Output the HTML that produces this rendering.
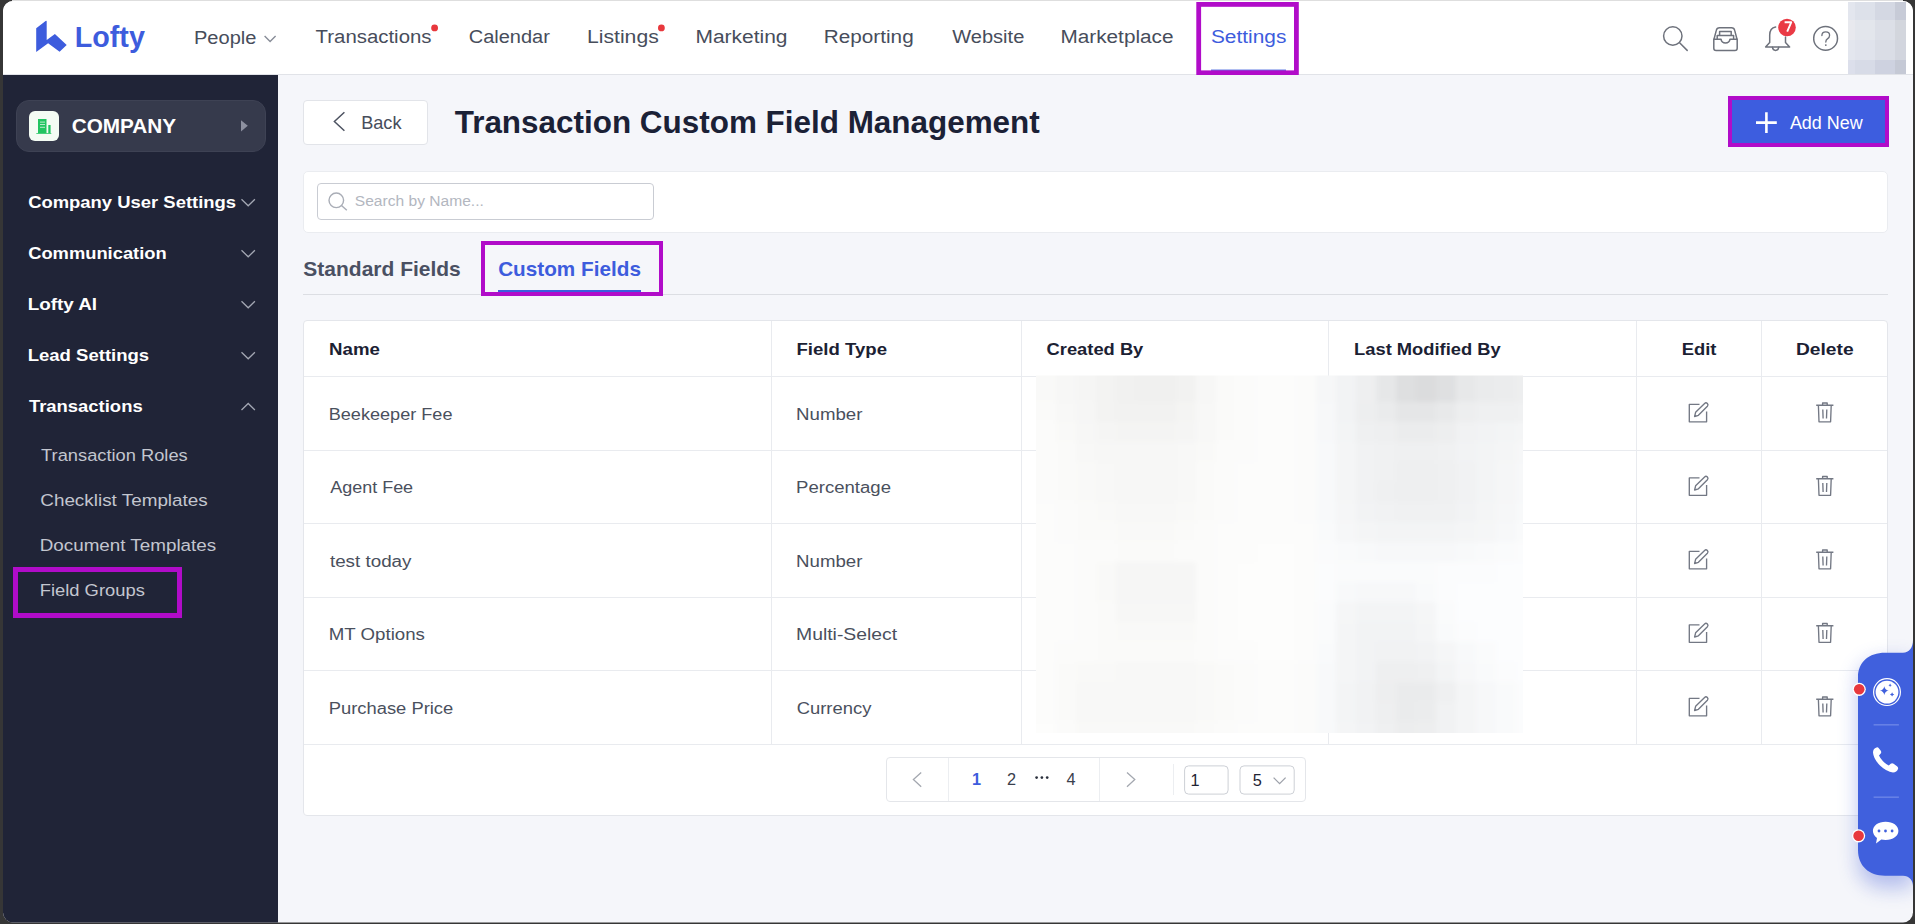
<!DOCTYPE html>
<html><head><meta charset="utf-8">
<style>
*{box-sizing:border-box;margin:0;padding:0}
html,body{width:1915px;height:924px;overflow:hidden;background:#363636;font-family:"Liberation Sans",sans-serif}
#pg{position:absolute;left:0;top:0;width:1915px;height:924px;background:#f5f6fa;clip-path:inset(1px 2px 1.5px 3px round 10px)}
.a{position:absolute}
svg text{font-family:"Liberation Sans",sans-serif}
</style></head><body>
<div class="a" style="left:12px;top:0;width:1891px;height:1px;background:#dedede"></div>
<div id="pg">
  <!-- top bar -->
  <div class="a" style="left:0;top:0;width:1915px;height:74px;background:#fff"></div>
  <div class="a" style="left:0;top:74px;width:1915px;height:1px;background:#e1e3e8"></div>
  <!-- sidebar -->
  <div class="a" style="left:0;top:75px;width:278px;height:849px;background:#202437"></div>
  <div class="a" style="left:16px;top:100px;width:250px;height:52px;border-radius:13px;background:#363a4c;border:1px solid #3e4254"></div>
  <div class="a" style="left:29px;top:111px;width:30px;height:30px;border-radius:6px;background:#f4fcf4"></div>
  <svg class="a" style="left:29px;top:111px" width="30" height="30" viewBox="0 0 30 30">
    <path d="M9 8 H17.5 V22.3 H9 Z" fill="#22c461"/>
    <path d="M19.3 14 H21.6 V22.3 H19.3 Z" fill="#22c461"/>
    <path d="M7.3 22 H22.3 V22.8 H7.3Z" fill="#22c461"/>
    <path d="M11 11.1 H16 M11 13.5 H16 M11 16.3 H16" stroke="#c8f2d6" stroke-width="0.9"/>
  </svg>
  <svg class="a" style="left:240px;top:119px" width="9" height="14" viewBox="0 0 9 14"><path d="M1 1.2 L7.8 6.8 L1 12.4 Z" fill="#8d90a0"/></svg>
  <!-- sidebar chevrons -->
  <svg class="a" style="left:0;top:0" width="278" height="420">
    <g fill="none" stroke="#a3a7b3" stroke-width="1.3">
      <path d="M241.5 199.3 L248.2 205.8 L254.9 199.3"/>
      <path d="M241.5 250.3 L248.2 256.8 L254.9 250.3"/>
      <path d="M241.5 301.3 L248.2 307.8 L254.9 301.3"/>
      <path d="M241.5 352.3 L248.2 358.8 L254.9 352.3"/>
      <path d="M241.5 410 L248.2 403.5 L254.9 410"/>
    </g>
  </svg>
  <div class="a" style="left:13px;top:567px;width:169px;height:51px;border:5px solid #b10cc9"></div>

  <!-- logo mark -->
  <svg class="a" style="left:0;top:0" width="80" height="60">
    <path d="M36.2 28.3 L45.6 20.9 Q46.7 20.3 46.7 21.6 L46.7 39.9 L54.9 34.1 L66.7 45 L59.6 51.7 L48.1 43.3 L36.2 51.9 Z" fill="#3d5cdd"/>
  </svg>
  <!-- nav extras -->
  <svg class="a" style="left:0;top:0" width="1300" height="75">
    <path d="M264.6 36 L270.1 41.4 L275.6 36" fill="none" stroke="#878c97" stroke-width="1.4"/>
    <circle cx="434.6" cy="27.9" r="3.4" fill="#e8383d"/>
    <circle cx="661.4" cy="27.9" r="3.4" fill="#e8383d"/>
    <rect x="1211" y="69.6" width="75" height="1.2" fill="#3d5cdd"/>
    <rect x="1198.7" y="4.4" width="97.7" height="68.4" fill="none" stroke="#b10cc9" stroke-width="4.8"/>
  </svg>
  <!-- top right icons -->
  <svg class="a" style="left:1650px;top:10px" width="200" height="55" viewBox="1650 10 200 55">
    <g fill="none" stroke="#6e727c" stroke-width="1.5" stroke-linejoin="round" stroke-linecap="round">
      <circle cx="1672.8" cy="36" r="9.2"/>
      <path d="M1679.6 42.8 L1687.2 50.4"/>
      <path d="M1714 39.2 L1716.3 30.4 Q1716.9 27.8 1719.5 27.8 L1731.5 27.8 Q1734.1 27.8 1734.7 30.4 L1737 39.2"/>
      <path d="M1713.8 39.2 H1721 Q1721.6 43 1725.5 43 Q1729.4 43 1730 39.2 H1737.2 V48.3 Q1737.2 50.6 1734.9 50.6 H1716.1 Q1713.8 50.6 1713.8 48.3 Z"/>
      <path d="M1717.2 38.6 V35.4 H1733.6 V38.6"/>
      <path d="M1719.6 35.2 V31.6 H1731.2 V35.2"/>
      <path d="M1772.4 47.2 Q1772.9 50.4 1775.6 50.4 Q1778.3 50.4 1778.8 47.2"/>
      <path d="M1785.5 37 V42.5 L1789.6 47 H1765.6 L1769.7 42.5 V35 Q1769.7 28 1775.6 26.9"/>
      <circle cx="1825.6" cy="38.4" r="11.9"/>
    </g>
    <circle cx="1787" cy="27.5" r="8.8" fill="#ea3a45"/>
    <path d="M1784.6 22.3 H1791.2 L1787.2 31.6" fill="none" stroke="#fff" stroke-width="1.9" stroke-linejoin="round"/>
    <path d="M1821.9 35.6 Q1821.9 31.8 1825.8 31.8 Q1829.6 31.8 1829.6 35.3 Q1829.6 37.6 1827.4 38.9 Q1825.8 39.9 1825.8 42.1" fill="none" stroke="#6e727c" stroke-width="1.35" stroke-linecap="round"/><circle cx="1825.8" cy="45.1" r="0.95" fill="#6e727c"/>
  </svg>
  <!-- avatar blur -->
  <div class="a" style="left:1848px;top:2px;width:58px;height:72px;display:grid;grid-template-columns:7px 20px 20px 11px;grid-template-rows:18px 20px 20px 14px">
    <div style="background:#e3e6ee"></div><div style="background:#dde1ea"></div><div style="background:#d4d8e3"></div><div style="background:#c7cbd7"></div>
    <div style="background:#e8e9ee"></div><div style="background:#e3e6ec"></div><div style="background:#dcdfe7"></div><div style="background:#d3d6dd"></div>
    <div style="background:#e3e6ee"></div><div style="background:#e0e3ec"></div><div style="background:#dadde6"></div><div style="background:#d2d5de"></div>
    <div style="background:#dcdfeb"></div><div style="background:#d7dbe7"></div><div style="background:#ced2e0"></div><div style="background:#c5c9d5"></div>
  </div>

  <!-- back button -->
  <div class="a" style="left:303px;top:100px;width:124.5px;height:44.5px;background:#fff;border:1px solid #e2e4e9;border-radius:4px"></div>
  <svg class="a" style="left:0;top:0;overflow:visible" width="1" height="1">
    <path d="M344.4 112.2 L334.4 121.5 L344.4 130.8" fill="none" stroke="#4d5361" stroke-width="1.5"/>
  </svg>
  <!-- add new -->
  <div class="a" style="left:1728px;top:95.5px;width:161px;height:51px;background:#3d5ddf;border:4.8px solid #b10cc9"></div>
  <svg class="a" style="left:0;top:0;overflow:visible" width="1" height="1">
    <path d="M1766.4 112.3 V133 M1756 122.6 H1776.8" stroke="#fff" stroke-width="2.6"/>
  </svg>
  <!-- search card -->
  <div class="a" style="left:303px;top:170.5px;width:1585px;height:62px;background:#fff;border:1px solid #eaecf0;border-radius:5px"></div>
  <div class="a" style="left:317px;top:183px;width:337px;height:37px;background:#fff;border:1px solid #c9ccd3;border-radius:4px"></div>
  <svg class="a" style="left:0;top:0;overflow:visible" width="1" height="1">
    <circle cx="336.3" cy="200.3" r="7.3" fill="none" stroke="#a9adb6" stroke-width="1.4"/>
    <path d="M341.5 205.5 L346.8 210.3" stroke="#a9adb6" stroke-width="1.4"/>
  </svg>
  <!-- tabs -->
  <div class="a" style="left:303px;top:293.5px;width:1585px;height:1px;background:#dcdee3"></div>
  <div class="a" style="left:498.4px;top:290px;width:142.2px;height:2.5px;background:#3d5cdd"></div>
  <div class="a" style="left:481px;top:240.5px;width:182px;height:55px;border:4.6px solid #b10cc9"></div>

  <!-- table card -->
  <div class="a" style="left:303px;top:320px;width:1585px;height:495.5px;background:#fff;border:1px solid #e4e6eb;border-radius:4px"></div>
  <svg class="a" style="left:0;top:0" width="1915" height="924">
    <g fill="#e9ebef">
      <rect x="771" y="321" width="1" height="423"/>
      <rect x="1021" y="321" width="1" height="423"/>
      <rect x="1328" y="321" width="1" height="423"/>
      <rect x="1636" y="321" width="1" height="423"/>
      <rect x="1761" y="321" width="1" height="423"/>
      <rect x="304" y="376" width="1583" height="1"/>
      <rect x="304" y="450" width="1583" height="1"/>
      <rect x="304" y="523" width="1583" height="1"/>
      <rect x="304" y="597" width="1583" height="1"/>
      <rect x="304" y="670" width="1583" height="1"/>
      <rect x="304" y="744" width="1583" height="1"/>
    </g>
    <defs><filter id="bl" x="0" y="0" width="1" height="1"><feGaussianBlur stdDeviation="2.5" edgeMode="duplicate"/></filter><clipPath id="blc"><rect x="1036" y="375.5" width="487" height="357.5"/></clipPath></defs><g clip-path="url(#blc)"><g filter="url(#bl)"><rect x="1029" y="368" width="27" height="34" fill="rgb(249,249,248)"/><rect x="1056" y="368" width="20" height="34" fill="rgb(247,247,246)"/><rect x="1076" y="368" width="20" height="34" fill="rgb(245,245,244)"/><rect x="1096" y="368" width="20" height="34" fill="rgb(243,243,242)"/><rect x="1116" y="368" width="20" height="34" fill="rgb(241,241,240)"/><rect x="1136" y="368" width="20" height="34" fill="rgb(240,240,239)"/><rect x="1156" y="368" width="20" height="34" fill="rgb(240,240,239)"/><rect x="1176" y="368" width="20" height="34" fill="rgb(242,242,241)"/><rect x="1196" y="368" width="20" height="34" fill="rgb(247,247,246)"/><rect x="1216" y="368" width="20" height="34" fill="rgb(250,250,249)"/><rect x="1236" y="368" width="20" height="34" fill="rgb(251,251,250)"/><rect x="1256" y="368" width="20" height="34" fill="rgb(252,252,251)"/><rect x="1276" y="368" width="20" height="34" fill="rgb(252,252,251)"/><rect x="1296" y="368" width="20" height="34" fill="rgb(251,251,250)"/><rect x="1316" y="368" width="20" height="34" fill="rgb(246,247,248)"/><rect x="1336" y="368" width="20" height="34" fill="rgb(242,243,244)"/><rect x="1356" y="368" width="20" height="34" fill="rgb(238,239,240)"/><rect x="1376" y="368" width="20" height="34" fill="rgb(230,231,232)"/><rect x="1396" y="368" width="20" height="34" fill="rgb(222,223,224)"/><rect x="1416" y="368" width="20" height="34" fill="rgb(219,220,221)"/><rect x="1436" y="368" width="20" height="34" fill="rgb(223,224,225)"/><rect x="1456" y="368" width="20" height="34" fill="rgb(231,232,233)"/><rect x="1476" y="368" width="20" height="34" fill="rgb(234,235,236)"/><rect x="1496" y="368" width="20" height="34" fill="rgb(235,236,237)"/><rect x="1516" y="368" width="14" height="34" fill="rgb(237,238,239)"/><rect x="1029" y="402" width="27" height="20" fill="rgb(250,250,249)"/><rect x="1056" y="402" width="20" height="20" fill="rgb(248,248,247)"/><rect x="1076" y="402" width="20" height="20" fill="rgb(246,246,245)"/><rect x="1096" y="402" width="20" height="20" fill="rgb(243,243,242)"/><rect x="1116" y="402" width="20" height="20" fill="rgb(242,242,241)"/><rect x="1136" y="402" width="20" height="20" fill="rgb(242,242,241)"/><rect x="1156" y="402" width="20" height="20" fill="rgb(242,242,241)"/><rect x="1176" y="402" width="20" height="20" fill="rgb(244,244,243)"/><rect x="1196" y="402" width="20" height="20" fill="rgb(248,248,247)"/><rect x="1216" y="402" width="20" height="20" fill="rgb(250,250,249)"/><rect x="1236" y="402" width="20" height="20" fill="rgb(251,251,250)"/><rect x="1256" y="402" width="20" height="20" fill="rgb(252,252,251)"/><rect x="1276" y="402" width="20" height="20" fill="rgb(252,252,251)"/><rect x="1296" y="402" width="20" height="20" fill="rgb(251,251,250)"/><rect x="1316" y="402" width="20" height="20" fill="rgb(247,248,249)"/><rect x="1336" y="402" width="20" height="20" fill="rgb(242,243,244)"/><rect x="1356" y="402" width="20" height="20" fill="rgb(237,238,239)"/><rect x="1376" y="402" width="20" height="20" fill="rgb(234,235,236)"/><rect x="1396" y="402" width="20" height="20" fill="rgb(229,230,231)"/><rect x="1416" y="402" width="20" height="20" fill="rgb(229,230,231)"/><rect x="1436" y="402" width="20" height="20" fill="rgb(232,233,234)"/><rect x="1456" y="402" width="20" height="20" fill="rgb(237,238,239)"/><rect x="1476" y="402" width="20" height="20" fill="rgb(239,240,241)"/><rect x="1496" y="402" width="20" height="20" fill="rgb(239,240,241)"/><rect x="1516" y="402" width="14" height="20" fill="rgb(240,241,242)"/><rect x="1029" y="422" width="27" height="20" fill="rgb(251,251,250)"/><rect x="1056" y="422" width="20" height="20" fill="rgb(249,249,248)"/><rect x="1076" y="422" width="20" height="20" fill="rgb(247,247,246)"/><rect x="1096" y="422" width="20" height="20" fill="rgb(245,245,244)"/><rect x="1116" y="422" width="20" height="20" fill="rgb(244,244,243)"/><rect x="1136" y="422" width="20" height="20" fill="rgb(244,244,243)"/><rect x="1156" y="422" width="20" height="20" fill="rgb(244,244,243)"/><rect x="1176" y="422" width="20" height="20" fill="rgb(245,245,244)"/><rect x="1196" y="422" width="20" height="20" fill="rgb(248,248,247)"/><rect x="1216" y="422" width="20" height="20" fill="rgb(250,250,249)"/><rect x="1236" y="422" width="20" height="20" fill="rgb(251,251,250)"/><rect x="1256" y="422" width="20" height="20" fill="rgb(252,252,251)"/><rect x="1276" y="422" width="20" height="20" fill="rgb(252,252,251)"/><rect x="1296" y="422" width="20" height="20" fill="rgb(251,251,250)"/><rect x="1316" y="422" width="20" height="20" fill="rgb(247,248,249)"/><rect x="1336" y="422" width="20" height="20" fill="rgb(243,244,245)"/><rect x="1356" y="422" width="20" height="20" fill="rgb(239,240,241)"/><rect x="1376" y="422" width="20" height="20" fill="rgb(238,239,240)"/><rect x="1396" y="422" width="20" height="20" fill="rgb(235,236,237)"/><rect x="1416" y="422" width="20" height="20" fill="rgb(235,236,237)"/><rect x="1436" y="422" width="20" height="20" fill="rgb(237,238,239)"/><rect x="1456" y="422" width="20" height="20" fill="rgb(241,242,243)"/><rect x="1476" y="422" width="20" height="20" fill="rgb(242,243,244)"/><rect x="1496" y="422" width="20" height="20" fill="rgb(243,244,245)"/><rect x="1516" y="422" width="14" height="20" fill="rgb(244,245,246)"/><rect x="1029" y="442" width="27" height="20" fill="rgb(251,251,250)"/><rect x="1056" y="442" width="20" height="20" fill="rgb(250,250,249)"/><rect x="1076" y="442" width="20" height="20" fill="rgb(248,248,247)"/><rect x="1096" y="442" width="20" height="20" fill="rgb(247,247,246)"/><rect x="1116" y="442" width="20" height="20" fill="rgb(247,247,246)"/><rect x="1136" y="442" width="20" height="20" fill="rgb(247,247,246)"/><rect x="1156" y="442" width="20" height="20" fill="rgb(247,247,246)"/><rect x="1176" y="442" width="20" height="20" fill="rgb(248,248,247)"/><rect x="1196" y="442" width="20" height="20" fill="rgb(249,249,248)"/><rect x="1216" y="442" width="20" height="20" fill="rgb(251,251,250)"/><rect x="1236" y="442" width="20" height="20" fill="rgb(251,251,250)"/><rect x="1256" y="442" width="20" height="20" fill="rgb(252,252,251)"/><rect x="1276" y="442" width="20" height="20" fill="rgb(252,252,251)"/><rect x="1296" y="442" width="20" height="20" fill="rgb(251,251,250)"/><rect x="1316" y="442" width="20" height="20" fill="rgb(248,249,250)"/><rect x="1336" y="442" width="20" height="20" fill="rgb(244,245,246)"/><rect x="1356" y="442" width="20" height="20" fill="rgb(241,242,243)"/><rect x="1376" y="442" width="20" height="20" fill="rgb(240,241,242)"/><rect x="1396" y="442" width="20" height="20" fill="rgb(239,240,241)"/><rect x="1416" y="442" width="20" height="20" fill="rgb(239,240,241)"/><rect x="1436" y="442" width="20" height="20" fill="rgb(240,241,242)"/><rect x="1456" y="442" width="20" height="20" fill="rgb(242,243,244)"/><rect x="1476" y="442" width="20" height="20" fill="rgb(243,244,245)"/><rect x="1496" y="442" width="20" height="20" fill="rgb(244,245,246)"/><rect x="1516" y="442" width="14" height="20" fill="rgb(246,247,248)"/><rect x="1029" y="462" width="27" height="20" fill="rgb(251,251,250)"/><rect x="1056" y="462" width="20" height="20" fill="rgb(250,250,249)"/><rect x="1076" y="462" width="20" height="20" fill="rgb(249,249,248)"/><rect x="1096" y="462" width="20" height="20" fill="rgb(248,248,247)"/><rect x="1116" y="462" width="20" height="20" fill="rgb(247,247,246)"/><rect x="1136" y="462" width="20" height="20" fill="rgb(247,247,246)"/><rect x="1156" y="462" width="20" height="20" fill="rgb(247,247,246)"/><rect x="1176" y="462" width="20" height="20" fill="rgb(248,248,247)"/><rect x="1196" y="462" width="20" height="20" fill="rgb(250,250,249)"/><rect x="1216" y="462" width="20" height="20" fill="rgb(251,251,250)"/><rect x="1236" y="462" width="20" height="20" fill="rgb(252,252,251)"/><rect x="1256" y="462" width="20" height="20" fill="rgb(252,252,251)"/><rect x="1276" y="462" width="20" height="20" fill="rgb(252,252,251)"/><rect x="1296" y="462" width="20" height="20" fill="rgb(251,251,250)"/><rect x="1316" y="462" width="20" height="20" fill="rgb(248,249,250)"/><rect x="1336" y="462" width="20" height="20" fill="rgb(244,245,246)"/><rect x="1356" y="462" width="20" height="20" fill="rgb(241,242,243)"/><rect x="1376" y="462" width="20" height="20" fill="rgb(240,241,242)"/><rect x="1396" y="462" width="20" height="20" fill="rgb(238,239,240)"/><rect x="1416" y="462" width="20" height="20" fill="rgb(238,239,240)"/><rect x="1436" y="462" width="20" height="20" fill="rgb(239,240,241)"/><rect x="1456" y="462" width="20" height="20" fill="rgb(241,242,243)"/><rect x="1476" y="462" width="20" height="20" fill="rgb(243,244,245)"/><rect x="1496" y="462" width="20" height="20" fill="rgb(245,246,247)"/><rect x="1516" y="462" width="14" height="20" fill="rgb(247,248,249)"/><rect x="1029" y="482" width="27" height="20" fill="rgb(251,251,250)"/><rect x="1056" y="482" width="20" height="20" fill="rgb(250,250,249)"/><rect x="1076" y="482" width="20" height="20" fill="rgb(249,249,248)"/><rect x="1096" y="482" width="20" height="20" fill="rgb(248,248,247)"/><rect x="1116" y="482" width="20" height="20" fill="rgb(247,247,246)"/><rect x="1136" y="482" width="20" height="20" fill="rgb(247,247,246)"/><rect x="1156" y="482" width="20" height="20" fill="rgb(247,247,246)"/><rect x="1176" y="482" width="20" height="20" fill="rgb(248,248,247)"/><rect x="1196" y="482" width="20" height="20" fill="rgb(250,250,249)"/><rect x="1216" y="482" width="20" height="20" fill="rgb(251,251,250)"/><rect x="1236" y="482" width="20" height="20" fill="rgb(252,252,251)"/><rect x="1256" y="482" width="20" height="20" fill="rgb(252,252,251)"/><rect x="1276" y="482" width="20" height="20" fill="rgb(252,252,251)"/><rect x="1296" y="482" width="20" height="20" fill="rgb(251,251,250)"/><rect x="1316" y="482" width="20" height="20" fill="rgb(248,249,250)"/><rect x="1336" y="482" width="20" height="20" fill="rgb(244,245,246)"/><rect x="1356" y="482" width="20" height="20" fill="rgb(241,242,243)"/><rect x="1376" y="482" width="20" height="20" fill="rgb(239,240,241)"/><rect x="1396" y="482" width="20" height="20" fill="rgb(238,239,240)"/><rect x="1416" y="482" width="20" height="20" fill="rgb(238,239,240)"/><rect x="1436" y="482" width="20" height="20" fill="rgb(239,240,241)"/><rect x="1456" y="482" width="20" height="20" fill="rgb(241,242,243)"/><rect x="1476" y="482" width="20" height="20" fill="rgb(243,244,245)"/><rect x="1496" y="482" width="20" height="20" fill="rgb(245,246,247)"/><rect x="1516" y="482" width="14" height="20" fill="rgb(247,248,249)"/><rect x="1029" y="502" width="27" height="20" fill="rgb(252,252,251)"/><rect x="1056" y="502" width="20" height="20" fill="rgb(251,251,250)"/><rect x="1076" y="502" width="20" height="20" fill="rgb(250,250,249)"/><rect x="1096" y="502" width="20" height="20" fill="rgb(249,249,248)"/><rect x="1116" y="502" width="20" height="20" fill="rgb(248,248,247)"/><rect x="1136" y="502" width="20" height="20" fill="rgb(248,248,247)"/><rect x="1156" y="502" width="20" height="20" fill="rgb(248,248,247)"/><rect x="1176" y="502" width="20" height="20" fill="rgb(249,249,248)"/><rect x="1196" y="502" width="20" height="20" fill="rgb(250,250,249)"/><rect x="1216" y="502" width="20" height="20" fill="rgb(251,251,250)"/><rect x="1236" y="502" width="20" height="20" fill="rgb(252,252,251)"/><rect x="1256" y="502" width="20" height="20" fill="rgb(252,252,251)"/><rect x="1276" y="502" width="20" height="20" fill="rgb(252,252,251)"/><rect x="1296" y="502" width="20" height="20" fill="rgb(251,251,250)"/><rect x="1316" y="502" width="20" height="20" fill="rgb(248,249,250)"/><rect x="1336" y="502" width="20" height="20" fill="rgb(245,246,247)"/><rect x="1356" y="502" width="20" height="20" fill="rgb(242,243,244)"/><rect x="1376" y="502" width="20" height="20" fill="rgb(241,242,243)"/><rect x="1396" y="502" width="20" height="20" fill="rgb(240,241,242)"/><rect x="1416" y="502" width="20" height="20" fill="rgb(240,241,242)"/><rect x="1436" y="502" width="20" height="20" fill="rgb(240,241,242)"/><rect x="1456" y="502" width="20" height="20" fill="rgb(242,243,244)"/><rect x="1476" y="502" width="20" height="20" fill="rgb(244,245,246)"/><rect x="1496" y="502" width="20" height="20" fill="rgb(246,247,248)"/><rect x="1516" y="502" width="14" height="20" fill="rgb(248,249,250)"/><rect x="1029" y="522" width="27" height="20" fill="rgb(252,252,251)"/><rect x="1056" y="522" width="20" height="20" fill="rgb(251,251,250)"/><rect x="1076" y="522" width="20" height="20" fill="rgb(250,250,249)"/><rect x="1096" y="522" width="20" height="20" fill="rgb(250,250,249)"/><rect x="1116" y="522" width="20" height="20" fill="rgb(249,249,248)"/><rect x="1136" y="522" width="20" height="20" fill="rgb(249,249,248)"/><rect x="1156" y="522" width="20" height="20" fill="rgb(249,249,248)"/><rect x="1176" y="522" width="20" height="20" fill="rgb(250,250,249)"/><rect x="1196" y="522" width="20" height="20" fill="rgb(251,251,250)"/><rect x="1216" y="522" width="20" height="20" fill="rgb(252,252,251)"/><rect x="1236" y="522" width="20" height="20" fill="rgb(252,252,251)"/><rect x="1256" y="522" width="20" height="20" fill="rgb(252,252,251)"/><rect x="1276" y="522" width="20" height="20" fill="rgb(252,252,251)"/><rect x="1296" y="522" width="20" height="20" fill="rgb(252,252,251)"/><rect x="1316" y="522" width="20" height="20" fill="rgb(249,250,251)"/><rect x="1336" y="522" width="20" height="20" fill="rgb(246,247,248)"/><rect x="1356" y="522" width="20" height="20" fill="rgb(244,245,246)"/><rect x="1376" y="522" width="20" height="20" fill="rgb(243,244,245)"/><rect x="1396" y="522" width="20" height="20" fill="rgb(243,244,245)"/><rect x="1416" y="522" width="20" height="20" fill="rgb(243,244,245)"/><rect x="1436" y="522" width="20" height="20" fill="rgb(243,244,245)"/><rect x="1456" y="522" width="20" height="20" fill="rgb(244,245,246)"/><rect x="1476" y="522" width="20" height="20" fill="rgb(245,246,247)"/><rect x="1496" y="522" width="20" height="20" fill="rgb(247,248,249)"/><rect x="1516" y="522" width="14" height="20" fill="rgb(249,250,251)"/><rect x="1029" y="542" width="27" height="20" fill="rgb(252,252,251)"/><rect x="1056" y="542" width="20" height="20" fill="rgb(252,252,251)"/><rect x="1076" y="542" width="20" height="20" fill="rgb(251,251,250)"/><rect x="1096" y="542" width="20" height="20" fill="rgb(251,251,250)"/><rect x="1116" y="542" width="20" height="20" fill="rgb(250,250,249)"/><rect x="1136" y="542" width="20" height="20" fill="rgb(250,250,249)"/><rect x="1156" y="542" width="20" height="20" fill="rgb(250,250,249)"/><rect x="1176" y="542" width="20" height="20" fill="rgb(251,251,250)"/><rect x="1196" y="542" width="20" height="20" fill="rgb(251,251,250)"/><rect x="1216" y="542" width="20" height="20" fill="rgb(252,252,251)"/><rect x="1236" y="542" width="20" height="20" fill="rgb(252,252,251)"/><rect x="1256" y="542" width="20" height="20" fill="rgb(253,253,252)"/><rect x="1276" y="542" width="20" height="20" fill="rgb(253,253,252)"/><rect x="1296" y="542" width="20" height="20" fill="rgb(252,252,251)"/><rect x="1316" y="542" width="20" height="20" fill="rgb(250,251,252)"/><rect x="1336" y="542" width="20" height="20" fill="rgb(249,250,251)"/><rect x="1356" y="542" width="20" height="20" fill="rgb(248,249,250)"/><rect x="1376" y="542" width="20" height="20" fill="rgb(247,248,249)"/><rect x="1396" y="542" width="20" height="20" fill="rgb(247,248,249)"/><rect x="1416" y="542" width="20" height="20" fill="rgb(247,248,249)"/><rect x="1436" y="542" width="20" height="20" fill="rgb(247,248,249)"/><rect x="1456" y="542" width="20" height="20" fill="rgb(248,249,250)"/><rect x="1476" y="542" width="20" height="20" fill="rgb(249,250,251)"/><rect x="1496" y="542" width="20" height="20" fill="rgb(250,251,252)"/><rect x="1516" y="542" width="14" height="20" fill="rgb(251,252,253)"/><rect x="1029" y="562" width="27" height="20" fill="rgb(252,252,251)"/><rect x="1056" y="562" width="20" height="20" fill="rgb(252,252,251)"/><rect x="1076" y="562" width="20" height="20" fill="rgb(251,251,250)"/><rect x="1096" y="562" width="20" height="20" fill="rgb(249,249,248)"/><rect x="1116" y="562" width="20" height="20" fill="rgb(246,246,245)"/><rect x="1136" y="562" width="20" height="20" fill="rgb(246,246,245)"/><rect x="1156" y="562" width="20" height="20" fill="rgb(246,246,245)"/><rect x="1176" y="562" width="20" height="20" fill="rgb(246,246,245)"/><rect x="1196" y="562" width="20" height="20" fill="rgb(251,251,250)"/><rect x="1216" y="562" width="20" height="20" fill="rgb(252,252,251)"/><rect x="1236" y="562" width="20" height="20" fill="rgb(253,253,252)"/><rect x="1256" y="562" width="20" height="20" fill="rgb(253,253,252)"/><rect x="1276" y="562" width="20" height="20" fill="rgb(253,253,252)"/><rect x="1296" y="562" width="20" height="20" fill="rgb(252,252,251)"/><rect x="1316" y="562" width="20" height="20" fill="rgb(251,252,253)"/><rect x="1336" y="562" width="20" height="20" fill="rgb(250,251,252)"/><rect x="1356" y="562" width="20" height="20" fill="rgb(250,251,252)"/><rect x="1376" y="562" width="20" height="20" fill="rgb(250,251,252)"/><rect x="1396" y="562" width="20" height="20" fill="rgb(250,251,252)"/><rect x="1416" y="562" width="20" height="20" fill="rgb(250,251,252)"/><rect x="1436" y="562" width="20" height="20" fill="rgb(251,252,253)"/><rect x="1456" y="562" width="20" height="20" fill="rgb(251,252,253)"/><rect x="1476" y="562" width="20" height="20" fill="rgb(251,252,253)"/><rect x="1496" y="562" width="20" height="20" fill="rgb(252,253,254)"/><rect x="1516" y="562" width="14" height="20" fill="rgb(252,253,254)"/><rect x="1029" y="582" width="27" height="20" fill="rgb(252,252,251)"/><rect x="1056" y="582" width="20" height="20" fill="rgb(252,252,251)"/><rect x="1076" y="582" width="20" height="20" fill="rgb(251,251,250)"/><rect x="1096" y="582" width="20" height="20" fill="rgb(249,249,248)"/><rect x="1116" y="582" width="20" height="20" fill="rgb(246,246,245)"/><rect x="1136" y="582" width="20" height="20" fill="rgb(246,246,245)"/><rect x="1156" y="582" width="20" height="20" fill="rgb(246,246,245)"/><rect x="1176" y="582" width="20" height="20" fill="rgb(246,246,245)"/><rect x="1196" y="582" width="20" height="20" fill="rgb(251,251,250)"/><rect x="1216" y="582" width="20" height="20" fill="rgb(252,252,251)"/><rect x="1236" y="582" width="20" height="20" fill="rgb(253,253,252)"/><rect x="1256" y="582" width="20" height="20" fill="rgb(253,253,252)"/><rect x="1276" y="582" width="20" height="20" fill="rgb(253,253,252)"/><rect x="1296" y="582" width="20" height="20" fill="rgb(252,252,251)"/><rect x="1316" y="582" width="20" height="20" fill="rgb(251,252,253)"/><rect x="1336" y="582" width="20" height="20" fill="rgb(248,249,250)"/><rect x="1356" y="582" width="20" height="20" fill="rgb(247,248,249)"/><rect x="1376" y="582" width="20" height="20" fill="rgb(247,248,249)"/><rect x="1396" y="582" width="20" height="20" fill="rgb(247,248,249)"/><rect x="1416" y="582" width="20" height="20" fill="rgb(249,250,251)"/><rect x="1436" y="582" width="20" height="20" fill="rgb(251,252,253)"/><rect x="1456" y="582" width="20" height="20" fill="rgb(252,253,254)"/><rect x="1476" y="582" width="20" height="20" fill="rgb(252,253,254)"/><rect x="1496" y="582" width="20" height="20" fill="rgb(252,253,254)"/><rect x="1516" y="582" width="14" height="20" fill="rgb(252,253,254)"/><rect x="1029" y="602" width="27" height="20" fill="rgb(252,252,251)"/><rect x="1056" y="602" width="20" height="20" fill="rgb(252,252,251)"/><rect x="1076" y="602" width="20" height="20" fill="rgb(251,251,250)"/><rect x="1096" y="602" width="20" height="20" fill="rgb(250,250,249)"/><rect x="1116" y="602" width="20" height="20" fill="rgb(247,247,246)"/><rect x="1136" y="602" width="20" height="20" fill="rgb(247,247,246)"/><rect x="1156" y="602" width="20" height="20" fill="rgb(247,247,246)"/><rect x="1176" y="602" width="20" height="20" fill="rgb(247,247,246)"/><rect x="1196" y="602" width="20" height="20" fill="rgb(251,251,250)"/><rect x="1216" y="602" width="20" height="20" fill="rgb(252,252,251)"/><rect x="1236" y="602" width="20" height="20" fill="rgb(253,253,252)"/><rect x="1256" y="602" width="20" height="20" fill="rgb(253,253,252)"/><rect x="1276" y="602" width="20" height="20" fill="rgb(253,253,252)"/><rect x="1296" y="602" width="20" height="20" fill="rgb(252,252,251)"/><rect x="1316" y="602" width="20" height="20" fill="rgb(250,251,252)"/><rect x="1336" y="602" width="20" height="20" fill="rgb(245,246,247)"/><rect x="1356" y="602" width="20" height="20" fill="rgb(243,244,245)"/><rect x="1376" y="602" width="20" height="20" fill="rgb(243,244,245)"/><rect x="1396" y="602" width="20" height="20" fill="rgb(243,244,245)"/><rect x="1416" y="602" width="20" height="20" fill="rgb(245,246,247)"/><rect x="1436" y="602" width="20" height="20" fill="rgb(250,251,252)"/><rect x="1456" y="602" width="20" height="20" fill="rgb(252,253,254)"/><rect x="1476" y="602" width="20" height="20" fill="rgb(252,253,254)"/><rect x="1496" y="602" width="20" height="20" fill="rgb(252,253,254)"/><rect x="1516" y="602" width="14" height="20" fill="rgb(252,253,254)"/><rect x="1029" y="622" width="27" height="20" fill="rgb(252,252,251)"/><rect x="1056" y="622" width="20" height="20" fill="rgb(252,252,251)"/><rect x="1076" y="622" width="20" height="20" fill="rgb(251,251,250)"/><rect x="1096" y="622" width="20" height="20" fill="rgb(250,250,249)"/><rect x="1116" y="622" width="20" height="20" fill="rgb(249,249,248)"/><rect x="1136" y="622" width="20" height="20" fill="rgb(249,249,248)"/><rect x="1156" y="622" width="20" height="20" fill="rgb(249,249,248)"/><rect x="1176" y="622" width="20" height="20" fill="rgb(249,249,248)"/><rect x="1196" y="622" width="20" height="20" fill="rgb(251,251,250)"/><rect x="1216" y="622" width="20" height="20" fill="rgb(252,252,251)"/><rect x="1236" y="622" width="20" height="20" fill="rgb(253,253,252)"/><rect x="1256" y="622" width="20" height="20" fill="rgb(253,253,252)"/><rect x="1276" y="622" width="20" height="20" fill="rgb(253,253,252)"/><rect x="1296" y="622" width="20" height="20" fill="rgb(252,252,251)"/><rect x="1316" y="622" width="20" height="20" fill="rgb(250,251,252)"/><rect x="1336" y="622" width="20" height="20" fill="rgb(244,245,246)"/><rect x="1356" y="622" width="20" height="20" fill="rgb(242,243,244)"/><rect x="1376" y="622" width="20" height="20" fill="rgb(242,243,244)"/><rect x="1396" y="622" width="20" height="20" fill="rgb(242,243,244)"/><rect x="1416" y="622" width="20" height="20" fill="rgb(244,245,246)"/><rect x="1436" y="622" width="20" height="20" fill="rgb(249,250,251)"/><rect x="1456" y="622" width="20" height="20" fill="rgb(251,252,253)"/><rect x="1476" y="622" width="20" height="20" fill="rgb(252,253,254)"/><rect x="1496" y="622" width="20" height="20" fill="rgb(252,253,254)"/><rect x="1516" y="622" width="14" height="20" fill="rgb(252,253,254)"/><rect x="1029" y="642" width="27" height="20" fill="rgb(252,252,251)"/><rect x="1056" y="642" width="20" height="20" fill="rgb(251,251,250)"/><rect x="1076" y="642" width="20" height="20" fill="rgb(251,251,250)"/><rect x="1096" y="642" width="20" height="20" fill="rgb(250,250,249)"/><rect x="1116" y="642" width="20" height="20" fill="rgb(250,250,249)"/><rect x="1136" y="642" width="20" height="20" fill="rgb(250,250,249)"/><rect x="1156" y="642" width="20" height="20" fill="rgb(250,250,249)"/><rect x="1176" y="642" width="20" height="20" fill="rgb(250,250,249)"/><rect x="1196" y="642" width="20" height="20" fill="rgb(251,251,250)"/><rect x="1216" y="642" width="20" height="20" fill="rgb(252,252,251)"/><rect x="1236" y="642" width="20" height="20" fill="rgb(252,252,251)"/><rect x="1256" y="642" width="20" height="20" fill="rgb(253,253,252)"/><rect x="1276" y="642" width="20" height="20" fill="rgb(253,253,252)"/><rect x="1296" y="642" width="20" height="20" fill="rgb(252,252,251)"/><rect x="1316" y="642" width="20" height="20" fill="rgb(249,250,251)"/><rect x="1336" y="642" width="20" height="20" fill="rgb(244,245,246)"/><rect x="1356" y="642" width="20" height="20" fill="rgb(242,243,244)"/><rect x="1376" y="642" width="20" height="20" fill="rgb(241,242,243)"/><rect x="1396" y="642" width="20" height="20" fill="rgb(241,242,243)"/><rect x="1416" y="642" width="20" height="20" fill="rgb(242,243,244)"/><rect x="1436" y="642" width="20" height="20" fill="rgb(245,246,247)"/><rect x="1456" y="642" width="20" height="20" fill="rgb(248,249,250)"/><rect x="1476" y="642" width="20" height="20" fill="rgb(250,251,252)"/><rect x="1496" y="642" width="20" height="20" fill="rgb(252,253,254)"/><rect x="1516" y="642" width="14" height="20" fill="rgb(252,253,254)"/><rect x="1029" y="662" width="27" height="20" fill="rgb(252,252,251)"/><rect x="1056" y="662" width="20" height="20" fill="rgb(250,250,249)"/><rect x="1076" y="662" width="20" height="20" fill="rgb(249,249,248)"/><rect x="1096" y="662" width="20" height="20" fill="rgb(249,249,248)"/><rect x="1116" y="662" width="20" height="20" fill="rgb(248,248,247)"/><rect x="1136" y="662" width="20" height="20" fill="rgb(248,248,247)"/><rect x="1156" y="662" width="20" height="20" fill="rgb(248,248,247)"/><rect x="1176" y="662" width="20" height="20" fill="rgb(248,248,247)"/><rect x="1196" y="662" width="20" height="20" fill="rgb(249,249,248)"/><rect x="1216" y="662" width="20" height="20" fill="rgb(250,250,249)"/><rect x="1236" y="662" width="20" height="20" fill="rgb(251,251,250)"/><rect x="1256" y="662" width="20" height="20" fill="rgb(252,252,251)"/><rect x="1276" y="662" width="20" height="20" fill="rgb(252,252,251)"/><rect x="1296" y="662" width="20" height="20" fill="rgb(251,251,250)"/><rect x="1316" y="662" width="20" height="20" fill="rgb(248,249,250)"/><rect x="1336" y="662" width="20" height="20" fill="rgb(244,245,246)"/><rect x="1356" y="662" width="20" height="20" fill="rgb(242,243,244)"/><rect x="1376" y="662" width="20" height="20" fill="rgb(238,239,240)"/><rect x="1396" y="662" width="20" height="20" fill="rgb(238,239,240)"/><rect x="1416" y="662" width="20" height="20" fill="rgb(239,240,241)"/><rect x="1436" y="662" width="20" height="20" fill="rgb(243,244,245)"/><rect x="1456" y="662" width="20" height="20" fill="rgb(247,248,249)"/><rect x="1476" y="662" width="20" height="20" fill="rgb(249,250,251)"/><rect x="1496" y="662" width="20" height="20" fill="rgb(251,252,253)"/><rect x="1516" y="662" width="14" height="20" fill="rgb(252,253,254)"/><rect x="1029" y="682" width="27" height="20" fill="rgb(252,252,251)"/><rect x="1056" y="682" width="20" height="20" fill="rgb(250,250,249)"/><rect x="1076" y="682" width="20" height="20" fill="rgb(248,248,247)"/><rect x="1096" y="682" width="20" height="20" fill="rgb(248,248,247)"/><rect x="1116" y="682" width="20" height="20" fill="rgb(248,248,247)"/><rect x="1136" y="682" width="20" height="20" fill="rgb(248,248,247)"/><rect x="1156" y="682" width="20" height="20" fill="rgb(248,248,247)"/><rect x="1176" y="682" width="20" height="20" fill="rgb(248,248,247)"/><rect x="1196" y="682" width="20" height="20" fill="rgb(249,249,248)"/><rect x="1216" y="682" width="20" height="20" fill="rgb(250,250,249)"/><rect x="1236" y="682" width="20" height="20" fill="rgb(251,251,250)"/><rect x="1256" y="682" width="20" height="20" fill="rgb(252,252,251)"/><rect x="1276" y="682" width="20" height="20" fill="rgb(252,252,251)"/><rect x="1296" y="682" width="20" height="20" fill="rgb(251,251,250)"/><rect x="1316" y="682" width="20" height="20" fill="rgb(248,249,250)"/><rect x="1336" y="682" width="20" height="20" fill="rgb(243,244,245)"/><rect x="1356" y="682" width="20" height="20" fill="rgb(241,242,243)"/><rect x="1376" y="682" width="20" height="20" fill="rgb(237,238,239)"/><rect x="1396" y="682" width="20" height="20" fill="rgb(234,235,236)"/><rect x="1416" y="682" width="20" height="20" fill="rgb(234,235,236)"/><rect x="1436" y="682" width="20" height="20" fill="rgb(239,240,241)"/><rect x="1456" y="682" width="20" height="20" fill="rgb(244,245,246)"/><rect x="1476" y="682" width="20" height="20" fill="rgb(247,248,249)"/><rect x="1496" y="682" width="20" height="20" fill="rgb(249,250,251)"/><rect x="1516" y="682" width="14" height="20" fill="rgb(251,252,253)"/><rect x="1029" y="702" width="27" height="20" fill="rgb(252,252,251)"/><rect x="1056" y="702" width="20" height="20" fill="rgb(250,250,249)"/><rect x="1076" y="702" width="20" height="20" fill="rgb(248,248,247)"/><rect x="1096" y="702" width="20" height="20" fill="rgb(248,248,247)"/><rect x="1116" y="702" width="20" height="20" fill="rgb(248,248,247)"/><rect x="1136" y="702" width="20" height="20" fill="rgb(248,248,247)"/><rect x="1156" y="702" width="20" height="20" fill="rgb(248,248,247)"/><rect x="1176" y="702" width="20" height="20" fill="rgb(248,248,247)"/><rect x="1196" y="702" width="20" height="20" fill="rgb(249,249,248)"/><rect x="1216" y="702" width="20" height="20" fill="rgb(250,250,249)"/><rect x="1236" y="702" width="20" height="20" fill="rgb(251,251,250)"/><rect x="1256" y="702" width="20" height="20" fill="rgb(252,252,251)"/><rect x="1276" y="702" width="20" height="20" fill="rgb(252,252,251)"/><rect x="1296" y="702" width="20" height="20" fill="rgb(251,251,250)"/><rect x="1316" y="702" width="20" height="20" fill="rgb(248,249,250)"/><rect x="1336" y="702" width="20" height="20" fill="rgb(243,244,245)"/><rect x="1356" y="702" width="20" height="20" fill="rgb(241,242,243)"/><rect x="1376" y="702" width="20" height="20" fill="rgb(238,239,240)"/><rect x="1396" y="702" width="20" height="20" fill="rgb(234,235,236)"/><rect x="1416" y="702" width="20" height="20" fill="rgb(235,236,237)"/><rect x="1436" y="702" width="20" height="20" fill="rgb(241,242,243)"/><rect x="1456" y="702" width="20" height="20" fill="rgb(244,245,246)"/><rect x="1476" y="702" width="20" height="20" fill="rgb(247,248,249)"/><rect x="1496" y="702" width="20" height="20" fill="rgb(249,250,251)"/><rect x="1516" y="702" width="14" height="20" fill="rgb(251,252,253)"/><rect x="1029" y="722" width="27" height="18" fill="rgb(253,253,252)"/><rect x="1056" y="722" width="20" height="18" fill="rgb(251,251,250)"/><rect x="1076" y="722" width="20" height="18" fill="rgb(249,249,248)"/><rect x="1096" y="722" width="20" height="18" fill="rgb(249,249,248)"/><rect x="1116" y="722" width="20" height="18" fill="rgb(249,249,248)"/><rect x="1136" y="722" width="20" height="18" fill="rgb(249,249,248)"/><rect x="1156" y="722" width="20" height="18" fill="rgb(249,249,248)"/><rect x="1176" y="722" width="20" height="18" fill="rgb(249,249,248)"/><rect x="1196" y="722" width="20" height="18" fill="rgb(250,250,249)"/><rect x="1216" y="722" width="20" height="18" fill="rgb(251,251,250)"/><rect x="1236" y="722" width="20" height="18" fill="rgb(252,252,251)"/><rect x="1256" y="722" width="20" height="18" fill="rgb(252,252,251)"/><rect x="1276" y="722" width="20" height="18" fill="rgb(252,252,251)"/><rect x="1296" y="722" width="20" height="18" fill="rgb(251,251,250)"/><rect x="1316" y="722" width="20" height="18" fill="rgb(248,249,250)"/><rect x="1336" y="722" width="20" height="18" fill="rgb(244,245,246)"/><rect x="1356" y="722" width="20" height="18" fill="rgb(242,243,244)"/><rect x="1376" y="722" width="20" height="18" fill="rgb(239,240,241)"/><rect x="1396" y="722" width="20" height="18" fill="rgb(236,237,238)"/><rect x="1416" y="722" width="20" height="18" fill="rgb(237,238,239)"/><rect x="1436" y="722" width="20" height="18" fill="rgb(241,242,243)"/><rect x="1456" y="722" width="20" height="18" fill="rgb(244,245,246)"/><rect x="1476" y="722" width="20" height="18" fill="rgb(247,248,249)"/><rect x="1496" y="722" width="20" height="18" fill="rgb(249,250,251)"/><rect x="1516" y="722" width="14" height="18" fill="rgb(251,252,253)"/></g></g>
    <g transform="translate(0 0.0)" fill="none" stroke="#737884" stroke-width="1.35" stroke-linejoin="round">
<path d="M1699.5 404.4 H1689.3 V421.8 H1706.6 V411.5"/>
<path d="M1694.6 416.5 L1695.6 412.3 L1704.6 403.4 Q1706 402.2 1707.4 403.5 Q1708.6 404.8 1707.4 406.2 L1698.4 415.3 Z"/>
<path d="M1816.2 405.2 H1833.4 M1822.6 405 V403 H1827.2 V405 M1818.4 405.5 L1819 421.8 H1830.6 L1831.2 405.5 M1822.8 409.4 L1823.1 418.6 M1826.8 409.4 L1826.5 418.6"/>
</g>
<g transform="translate(0 73.5)" fill="none" stroke="#737884" stroke-width="1.35" stroke-linejoin="round">
<path d="M1699.5 404.4 H1689.3 V421.8 H1706.6 V411.5"/>
<path d="M1694.6 416.5 L1695.6 412.3 L1704.6 403.4 Q1706 402.2 1707.4 403.5 Q1708.6 404.8 1707.4 406.2 L1698.4 415.3 Z"/>
<path d="M1816.2 405.2 H1833.4 M1822.6 405 V403 H1827.2 V405 M1818.4 405.5 L1819 421.8 H1830.6 L1831.2 405.5 M1822.8 409.4 L1823.1 418.6 M1826.8 409.4 L1826.5 418.6"/>
</g>
<g transform="translate(0 147.0)" fill="none" stroke="#737884" stroke-width="1.35" stroke-linejoin="round">
<path d="M1699.5 404.4 H1689.3 V421.8 H1706.6 V411.5"/>
<path d="M1694.6 416.5 L1695.6 412.3 L1704.6 403.4 Q1706 402.2 1707.4 403.5 Q1708.6 404.8 1707.4 406.2 L1698.4 415.3 Z"/>
<path d="M1816.2 405.2 H1833.4 M1822.6 405 V403 H1827.2 V405 M1818.4 405.5 L1819 421.8 H1830.6 L1831.2 405.5 M1822.8 409.4 L1823.1 418.6 M1826.8 409.4 L1826.5 418.6"/>
</g>
<g transform="translate(0 220.5)" fill="none" stroke="#737884" stroke-width="1.35" stroke-linejoin="round">
<path d="M1699.5 404.4 H1689.3 V421.8 H1706.6 V411.5"/>
<path d="M1694.6 416.5 L1695.6 412.3 L1704.6 403.4 Q1706 402.2 1707.4 403.5 Q1708.6 404.8 1707.4 406.2 L1698.4 415.3 Z"/>
<path d="M1816.2 405.2 H1833.4 M1822.6 405 V403 H1827.2 V405 M1818.4 405.5 L1819 421.8 H1830.6 L1831.2 405.5 M1822.8 409.4 L1823.1 418.6 M1826.8 409.4 L1826.5 418.6"/>
</g>
<g transform="translate(0 294.0)" fill="none" stroke="#737884" stroke-width="1.35" stroke-linejoin="round">
<path d="M1699.5 404.4 H1689.3 V421.8 H1706.6 V411.5"/>
<path d="M1694.6 416.5 L1695.6 412.3 L1704.6 403.4 Q1706 402.2 1707.4 403.5 Q1708.6 404.8 1707.4 406.2 L1698.4 415.3 Z"/>
<path d="M1816.2 405.2 H1833.4 M1822.6 405 V403 H1827.2 V405 M1818.4 405.5 L1819 421.8 H1830.6 L1831.2 405.5 M1822.8 409.4 L1823.1 418.6 M1826.8 409.4 L1826.5 418.6"/>
</g>

  </svg>
  <!-- pagination -->
  <div class="a" style="left:885.5px;top:757px;width:420px;height:44.5px;border:1px solid #e4e6ea;border-radius:4px;background:#fff"></div>
  <svg class="a" style="left:0;top:0" width="1915" height="924">
    <rect x="948" y="758" width="1" height="43" fill="#eceef1"/>
    <rect x="1099" y="758" width="1" height="43" fill="#eceef1"/>
    <rect x="1173" y="764" width="1" height="31" fill="#eceef1"/>
    <path d="M921.2 772.4 L913.4 779.6 L921.2 786.8" fill="none" stroke="#a4a8b0" stroke-width="1.3"/>
    <path d="M1127 772.4 L1134.8 779.6 L1127 786.8" fill="none" stroke="#a4a8b0" stroke-width="1.3"/>
    <circle cx="1036.6" cy="777.6" r="1.35" fill="#2a303c"/>
    <circle cx="1041.9" cy="777.6" r="1.35" fill="#2a303c"/>
    <circle cx="1047.2" cy="777.6" r="1.35" fill="#2a303c"/>
    <rect x="1184.6" y="765.9" width="43.5" height="28.2" rx="4" fill="#fff" stroke="#cdd0d6" stroke-width="1"/>
    <rect x="1240" y="765.9" width="54.2" height="28.2" rx="4" fill="#fff" stroke="#cdd0d6" stroke-width="1"/>
    <path d="M1273.6 777.6 L1279.6 783.6 L1285.6 777.6" fill="none" stroke="#9ea2ab" stroke-width="1.3"/>
  </svg>

  <!-- floating widget -->
  <svg class="a" style="left:1780px;top:600px" width="135" height="324" viewBox="1780 600 135 324">
    <defs>
      <filter id="sh" x="-60%" y="-40%" width="220%" height="180%"><feGaussianBlur stdDeviation="10"/></filter>
    </defs>
    <path d="M1858 684 C1858 668 1869 660 1886 660 L1913 660 L1913 888 L1886 888 C1869 888 1858 878 1858 862 Z" fill="#4a62d8" opacity="0.38" filter="url(#sh)"/>
    <path d="M1858 677 C1858 662 1869 652.7 1885 652.7 L1903 652.7 C1909 652.7 1913 648 1913 640 L1913 886 C1913 880 1909 875.7 1903 875.7 L1885 875.7 C1869 875.7 1858 866 1858 850 Z" fill="#4060dd"/>
    <circle cx="1859.2" cy="689.3" r="6.6" fill="#fff"/>
    <circle cx="1859.2" cy="689.3" r="5.3" fill="#e8383d"/>
    <circle cx="1858.6" cy="835.8" r="6.6" fill="#fff"/>
    <circle cx="1858.6" cy="835.8" r="5.3" fill="#e8383d"/>
    <circle cx="1887" cy="692.1" r="13.4" fill="none" stroke="#fff" stroke-width="1.2"/>
    <circle cx="1887" cy="692.1" r="11.4" fill="#fff"/>
    <path d="M1884.3 686.2 Q1885 690 1888.7 690.6 Q1885 691.2 1884.3 695 Q1883.6 691.2 1879.9 690.6 Q1883.6 690 1884.3 686.2Z" fill="#4060dd"/>
    <path d="M1890.1 683.6 Q1890.4 685 1891.8 685.3 Q1890.4 685.6 1890.1 687 Q1889.8 685.6 1888.4 685.3 Q1889.8 685 1890.1 683.6Z" fill="#4060dd"/>
    <path d="M1892.1 692.2 Q1892.5 694 1894.3 694.4 Q1892.5 694.8 1892.1 696.6 Q1891.7 694.8 1889.9 694.4 Q1891.7 694 1892.1 692.2Z" fill="#4060dd"/>
    <rect x="1873.6" y="724" width="25.3" height="1.6" fill="#6680e6"/>
    <rect x="1873.6" y="796.4" width="25.3" height="1.6" fill="#6680e6"/>
    <path d="M1876.5 747.6 Q1873 748.6 1873 752.5 Q1873.5 759 1880 765.5 Q1886.5 771.8 1893 772.4 Q1896.8 772.3 1898 769 Q1898.6 767.3 1897 766.2 L1893.6 763.7 Q1892 762.7 1890.7 763.8 L1888.8 765.4 Q1885.7 764 1883 761.2 Q1880.2 758.4 1879 755.5 L1880.7 753.6 Q1881.7 752.3 1880.8 750.8 L1878.6 747.9 Q1877.7 747 1876.5 747.6Z" fill="#fff"/>
    <path d="M1885.6 821.7 C1893 821.7 1898.4 825.6 1898.4 830.8 C1898.4 836 1893 840 1885.6 840 C1884 840 1882.6 839.8 1881.3 839.5 L1876 843.6 L1877 838 C1874.5 836.3 1872.9 833.7 1872.9 830.8 C1872.9 825.6 1878.2 821.7 1885.6 821.7Z" fill="#fff"/>
    <circle cx="1879" cy="831" r="1.4" fill="#4060dd"/>
    <circle cx="1885.5" cy="831" r="1.4" fill="#4060dd"/>
    <circle cx="1892.1" cy="831" r="1.4" fill="#4060dd"/>
  </svg>

  <!-- all text -->
  <svg class="a" style="left:0;top:0" width="1915" height="924">
<text x="74.74" y="46.70" font-size="29.5" font-weight="bold" fill="#3d5cdd" textLength="70.10" lengthAdjust="spacingAndGlyphs">Lofty</text>
<text x="194.00" y="43.60" font-size="18.0" font-weight="normal" fill="#474d5b" textLength="62.43" lengthAdjust="spacingAndGlyphs">People</text>
<text x="315.59" y="42.85" font-size="18.0" font-weight="normal" fill="#474d5b" textLength="115.92" lengthAdjust="spacingAndGlyphs">Transactions</text>
<text x="468.70" y="42.85" font-size="18.0" font-weight="normal" fill="#474d5b" textLength="81.16" lengthAdjust="spacingAndGlyphs">Calendar</text>
<text x="587.01" y="42.85" font-size="18.0" font-weight="normal" fill="#474d5b" textLength="71.73" lengthAdjust="spacingAndGlyphs">Listings</text>
<text x="695.52" y="42.85" font-size="18.0" font-weight="normal" fill="#474d5b" textLength="91.96" lengthAdjust="spacingAndGlyphs">Marketing</text>
<text x="823.84" y="42.85" font-size="18.0" font-weight="normal" fill="#474d5b" textLength="89.82" lengthAdjust="spacingAndGlyphs">Reporting</text>
<text x="952.20" y="42.85" font-size="18.0" font-weight="normal" fill="#474d5b" textLength="72.13" lengthAdjust="spacingAndGlyphs">Website</text>
<text x="1060.54" y="42.85" font-size="18.0" font-weight="normal" fill="#474d5b" textLength="112.91" lengthAdjust="spacingAndGlyphs">Marketplace</text>
<text x="1210.96" y="42.85" font-size="18.0" font-weight="normal" fill="#3d5cdd" textLength="75.37" lengthAdjust="spacingAndGlyphs">Settings</text>
<text x="71.67" y="133.00" font-size="19.6" font-weight="bold" fill="#ffffff" textLength="104.48" lengthAdjust="spacingAndGlyphs">COMPANY</text>
<text x="28.16" y="208.20" font-size="16.8" font-weight="bold" fill="#ffffff" textLength="207.90" lengthAdjust="spacingAndGlyphs">Company User Settings</text>
<text x="28.17" y="259.10" font-size="16.8" font-weight="bold" fill="#ffffff" textLength="138.55" lengthAdjust="spacingAndGlyphs">Communication</text>
<text x="27.69" y="310.10" font-size="16.8" font-weight="bold" fill="#ffffff" textLength="69.38" lengthAdjust="spacingAndGlyphs">Lofty AI</text>
<text x="27.70" y="361.10" font-size="16.8" font-weight="bold" fill="#ffffff" textLength="121.47" lengthAdjust="spacingAndGlyphs">Lead Settings</text>
<text x="28.92" y="411.90" font-size="16.8" font-weight="bold" fill="#ffffff" textLength="113.75" lengthAdjust="spacingAndGlyphs">Transactions</text>
<text x="41.13" y="460.90" font-size="16.8" font-weight="normal" fill="#c3c6cf" textLength="146.61" lengthAdjust="spacingAndGlyphs">Transaction Roles</text>
<text x="40.26" y="505.90" font-size="16.8" font-weight="normal" fill="#c3c6cf" textLength="167.50" lengthAdjust="spacingAndGlyphs">Checklist Templates</text>
<text x="39.70" y="550.90" font-size="16.8" font-weight="normal" fill="#c3c6cf" textLength="176.46" lengthAdjust="spacingAndGlyphs">Document Templates</text>
<text x="39.73" y="595.90" font-size="16.8" font-weight="normal" fill="#c3c6cf" textLength="105.11" lengthAdjust="spacingAndGlyphs">Field Groups</text>
<text x="361.15" y="129.00" font-size="18.2" font-weight="normal" fill="#474d5b" textLength="40.36" lengthAdjust="spacingAndGlyphs">Back</text>
<text x="454.69" y="133.00" font-size="32.2" font-weight="bold" fill="#1b2136" textLength="585.07" lengthAdjust="spacingAndGlyphs">Transaction Custom Field Management</text>
<text x="1789.90" y="129.00" font-size="17.5" font-weight="normal" fill="#ffffff" textLength="72.85" lengthAdjust="spacingAndGlyphs">Add New</text>
<text x="354.80" y="206.20" font-size="15.1" font-weight="normal" fill="#b3b7bf" textLength="129.07" lengthAdjust="spacingAndGlyphs">Search by Name...</text>
<text x="303.38" y="276.30" font-size="19.8" font-weight="bold" fill="#4a5062" textLength="157.38" lengthAdjust="spacingAndGlyphs">Standard Fields</text>
<text x="498.17" y="276.30" font-size="19.8" font-weight="bold" fill="#3d5cdd" textLength="142.78" lengthAdjust="spacingAndGlyphs">Custom Fields</text>
<text x="329.09" y="355.10" font-size="17.2" font-weight="bold" fill="#1b2133" textLength="50.79" lengthAdjust="spacingAndGlyphs">Name</text>
<text x="796.49" y="355.10" font-size="17.2" font-weight="bold" fill="#1b2133" textLength="90.49" lengthAdjust="spacingAndGlyphs">Field Type</text>
<text x="1046.57" y="355.10" font-size="17.2" font-weight="bold" fill="#1b2133" textLength="96.75" lengthAdjust="spacingAndGlyphs">Created By</text>
<text x="1354.11" y="355.10" font-size="17.2" font-weight="bold" fill="#1b2133" textLength="146.51" lengthAdjust="spacingAndGlyphs">Last Modified By</text>
<text x="1681.70" y="355.10" font-size="17.2" font-weight="bold" fill="#1b2133" textLength="34.74" lengthAdjust="spacingAndGlyphs">Edit</text>
<text x="1795.95" y="355.10" font-size="17.2" font-weight="bold" fill="#1b2133" textLength="57.65" lengthAdjust="spacingAndGlyphs">Delete</text>
<text x="328.75" y="419.80" font-size="17.3" font-weight="normal" fill="#4a505d" textLength="123.69" lengthAdjust="spacingAndGlyphs">Beekeeper Fee</text>
<text x="796.11" y="419.80" font-size="17.3" font-weight="normal" fill="#4a505d" textLength="66.33" lengthAdjust="spacingAndGlyphs">Number</text>
<text x="330.20" y="492.80" font-size="17.3" font-weight="normal" fill="#4a505d" textLength="82.94" lengthAdjust="spacingAndGlyphs">Agent Fee</text>
<text x="796.12" y="492.80" font-size="17.3" font-weight="normal" fill="#4a505d" textLength="94.85" lengthAdjust="spacingAndGlyphs">Percentage</text>
<text x="329.92" y="566.70" font-size="17.3" font-weight="normal" fill="#4a505d" textLength="81.58" lengthAdjust="spacingAndGlyphs">test today</text>
<text x="796.11" y="566.70" font-size="17.3" font-weight="normal" fill="#4a505d" textLength="66.33" lengthAdjust="spacingAndGlyphs">Number</text>
<text x="328.71" y="639.80" font-size="17.3" font-weight="normal" fill="#4a505d" textLength="96.24" lengthAdjust="spacingAndGlyphs">MT Options</text>
<text x="796.05" y="639.80" font-size="17.3" font-weight="normal" fill="#4a505d" textLength="101.10" lengthAdjust="spacingAndGlyphs">Multi-Select</text>
<text x="328.73" y="713.90" font-size="17.3" font-weight="normal" fill="#4a505d" textLength="124.52" lengthAdjust="spacingAndGlyphs">Purchase Price</text>
<text x="796.68" y="713.90" font-size="17.3" font-weight="normal" fill="#4a505d" textLength="74.72" lengthAdjust="spacingAndGlyphs">Currency</text>
<text x="971.92" y="784.60" font-size="16.3" font-weight="bold" fill="#3d5cdd" letter-spacing="0.000">1</text>
<text x="1006.88" y="784.60" font-size="16.3" font-weight="normal" fill="#3a404d" letter-spacing="0.000">2</text>
<text x="1066.57" y="784.60" font-size="16.3" font-weight="normal" fill="#3a404d" letter-spacing="0.000">4</text>
<text x="1190.48" y="785.80" font-size="16.3" font-weight="normal" fill="#1f2433" letter-spacing="0.000">1</text>
<text x="1252.85" y="785.80" font-size="16.3" font-weight="normal" fill="#1f2433" letter-spacing="0.000">5</text>
  </svg>
</div>
</body></html>
